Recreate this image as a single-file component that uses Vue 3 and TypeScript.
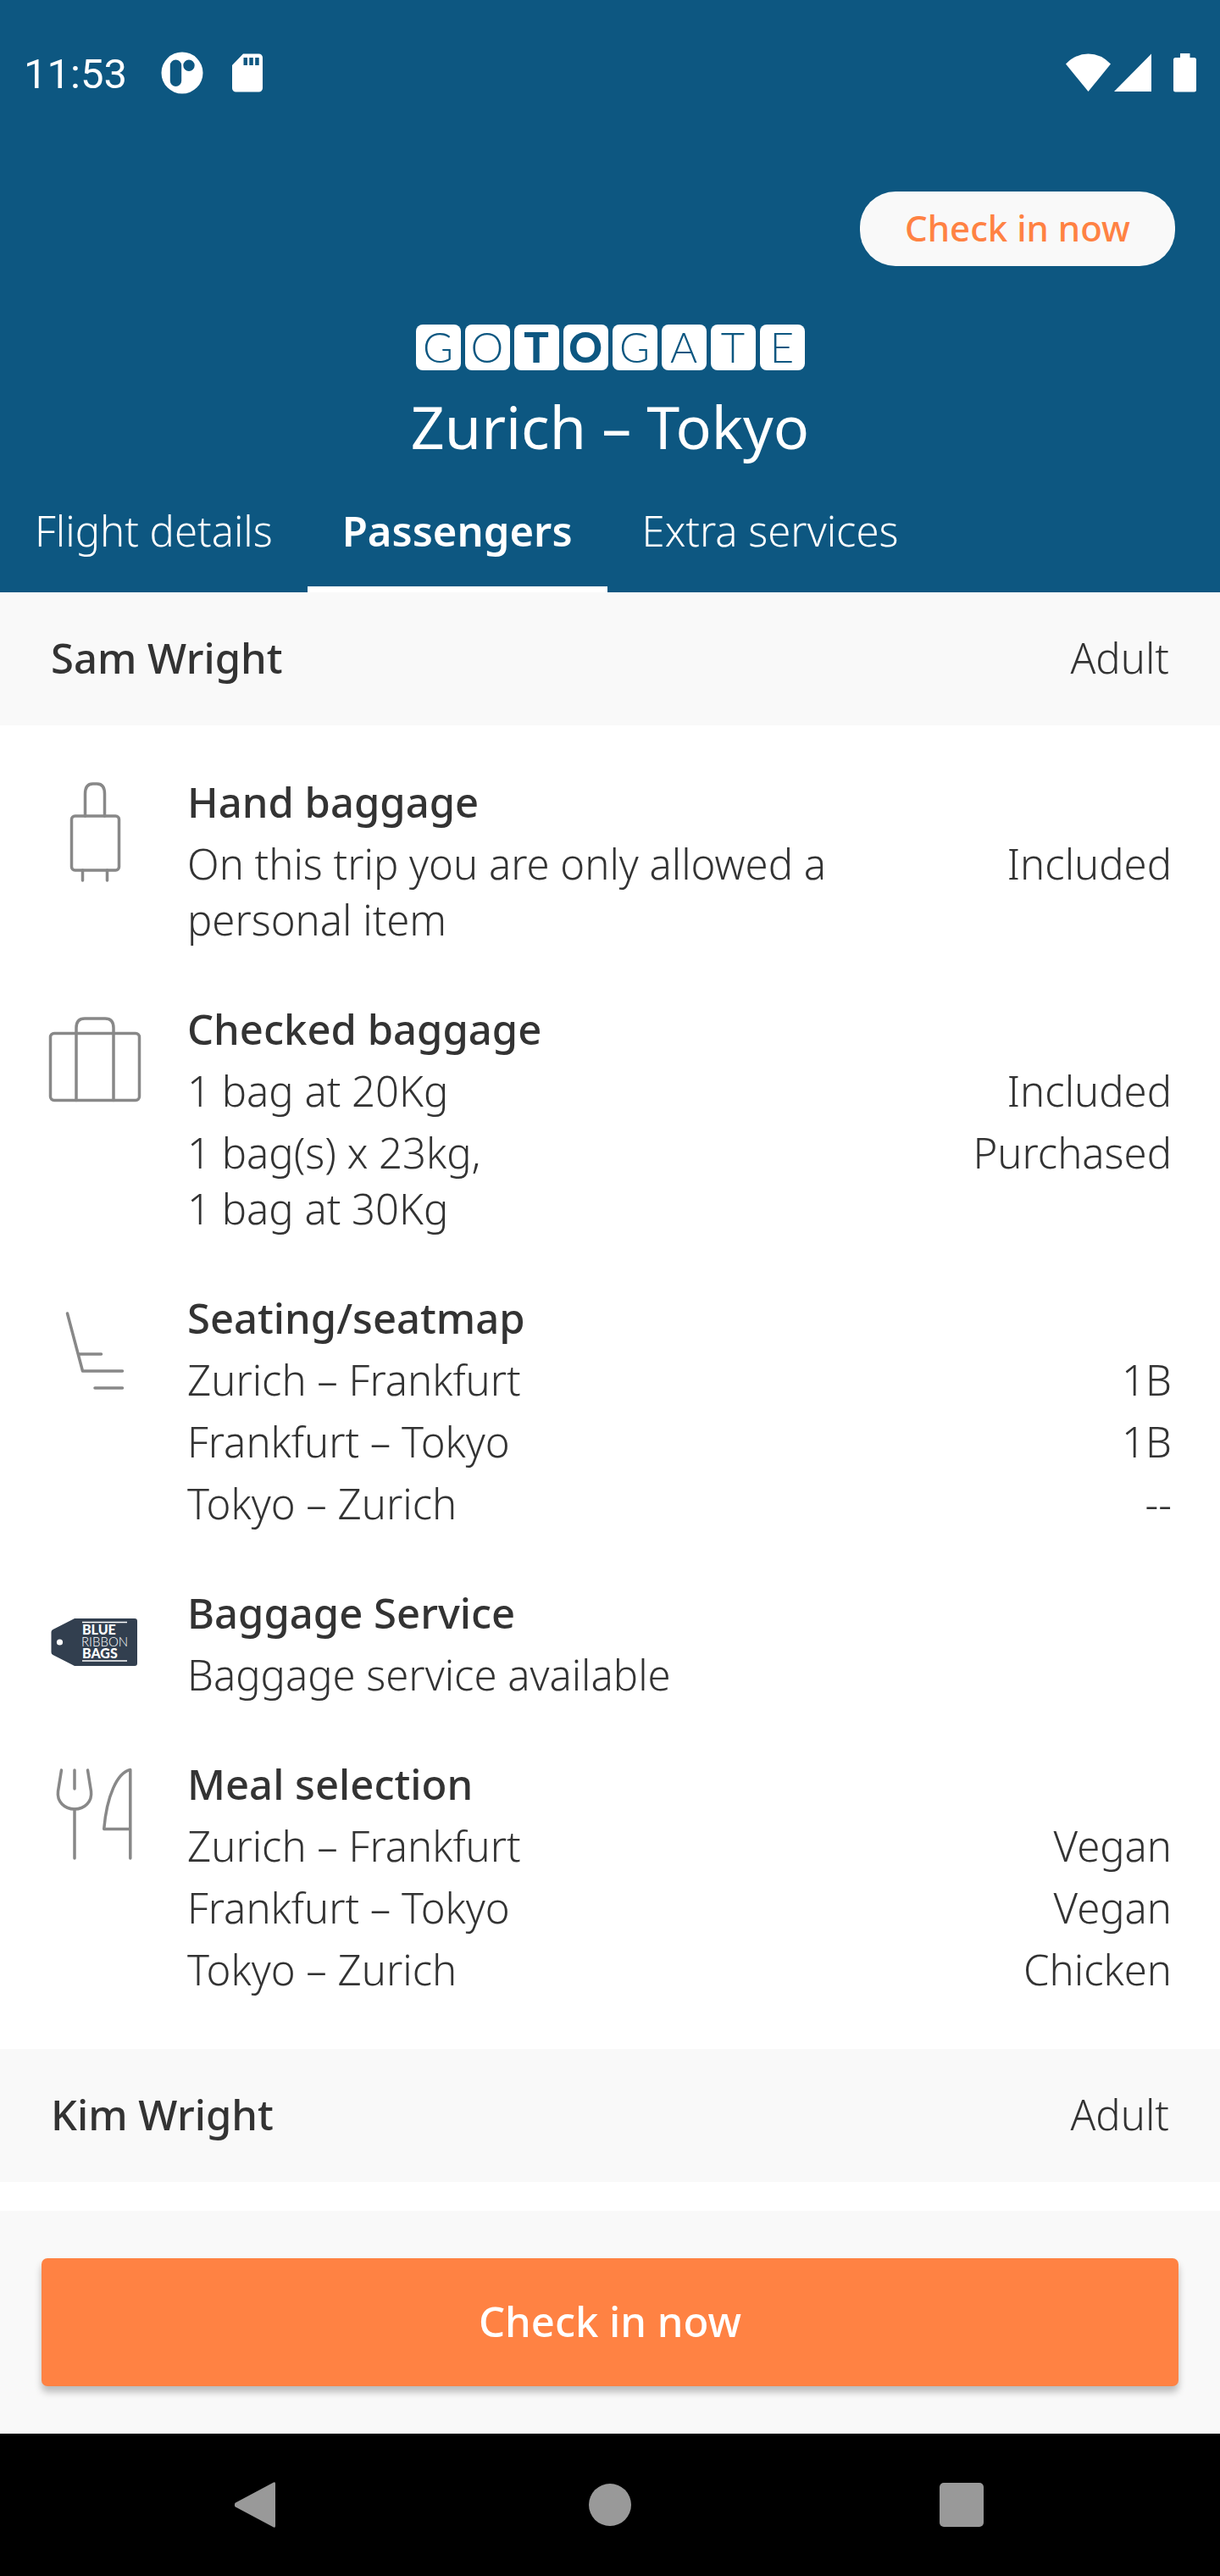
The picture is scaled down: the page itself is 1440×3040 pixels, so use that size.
<script setup lang="ts">
import { ref } from 'vue'

type IconName = 'hand' | 'checked' | 'seat' | 'tag' | 'meal'

interface Row {
  label: string
  value?: string
}

interface Service {
  icon: IconName
  title: string
  rows: Row[]
}

interface Passenger {
  name: string
  type: string
  services: Service[]
}

const tabs = ['Flight details', 'Passengers', 'Extra services']
const activeTab = ref('Passengers')

const logo = [
  { letter: 'G', heavy: false },
  { letter: 'O', heavy: false },
  { letter: 'T', heavy: true },
  { letter: 'O', heavy: true },
  { letter: 'G', heavy: false },
  { letter: 'A', heavy: false },
  { letter: 'T', heavy: false },
  { letter: 'E', heavy: false },
]

const passengers: Passenger[] = [
  {
    name: 'Sam Wright',
    type: 'Adult',
    services: [
      {
        icon: 'hand',
        title: 'Hand baggage',
        rows: [{ label: 'On this trip you are only allowed a personal item', value: 'Included' }],
      },
      {
        icon: 'checked',
        title: 'Checked baggage',
        rows: [
          { label: '1 bag at 20Kg', value: 'Included' },
          { label: '1 bag(s) x 23kg,\n1 bag at 30Kg', value: 'Purchased' },
        ],
      },
      {
        icon: 'seat',
        title: 'Seating/seatmap',
        rows: [
          { label: 'Zurich – Frankfurt', value: '1B' },
          { label: 'Frankfurt – Tokyo', value: '1B' },
          { label: 'Tokyo – Zurich', value: '--' },
        ],
      },
      {
        icon: 'tag',
        title: 'Baggage Service',
        rows: [{ label: 'Baggage service available' }],
      },
      {
        icon: 'meal',
        title: 'Meal selection',
        rows: [
          { label: 'Zurich – Frankfurt', value: 'Vegan' },
          { label: 'Frankfurt – Tokyo', value: 'Vegan' },
          { label: 'Tokyo – Zurich', value: 'Chicken' },
        ],
      },
    ],
  },
  { name: 'Kim Wright', type: 'Adult', services: [] },
]
</script>

<template>
  <div class="screen">
    <header class="header">
      <div class="status">
        <div class="status-left">
          <span class="clock">11:53</span>
          <svg class="ic-app" viewBox="0 0 50 50" aria-hidden="true">
            <path
              fill-rule="evenodd"
              d="M25 .5a24.5 24.5 0 1 1 0 49a24.5 24.5 0 1 1 0-49zM17.500 9.500a6.700 6.700 0 0 0-6.700 6.700v18a6.700 6.700 0 0 0 13.400 0v-18a6.700 6.700 0 0 0-6.700-6.700zM33 9.500a6.700 6.700 0 1 0 0 13.400a6.700 6.700 0 1 0 0-13.400z"
            />
          </svg>
          <svg class="ic-sd" viewBox="0 0 36 46" aria-hidden="true">
            <path
              fill-rule="evenodd"
              d="M13 .5h18.500a4.500 4.500 0 0 1 4.500 4.500v36a4.500 4.500 0 0 1-4.500 4.500h-27a4.500 4.500 0 0 1-4.500-4.500v-27zM13.500 5v9h4.500v-9zM20.300 5v9h4.500v-9zM27.200 5v9h4.500v-9z"
            />
          </svg>
        </div>
        <div class="status-right">
          <svg class="ic-wifi" viewBox="0 0 53 46" aria-hidden="true">
            <path d="M26.500 45L0 12.500Q11.500 .5 26.500 .5T53 12.500z" />
          </svg>
          <svg class="ic-signal" viewBox="0 0 44 46" aria-hidden="true">
            <path d="M44 .5V45H0z" />
          </svg>
          <svg class="ic-battery" viewBox="0 0 27 46" aria-hidden="true">
            <path
              d="M8 0h11.500v5H24.500a2.500 2.500 0 0 1 2.500 2.500v35.500a2.500 2.500 0 0 1-2.500 2.500h-22A2.500 2.500 0 0 1 0 43V7.500A2.500 2.500 0 0 1 2.500 5H8z"
            />
          </svg>
        </div>
      </div>

      <div class="actions">
        <button type="button" class="pill">Check in now</button>
      </div>

      <div class="logo" aria-label="Gotogate">
        <span v-for="(tile, i) in logo" :key="i" class="tile" :class="{ heavy: tile.heavy }">{{ tile.letter }}</span>
      </div>
      <h1 class="title">Zurich – Tokyo</h1>

      <nav class="tabs">
        <button
          v-for="tab in tabs"
          :key="tab"
          type="button"
          class="tab"
          :class="{ active: tab === activeTab }"
          @click="activeTab = tab"
        >
          {{ tab }}
        </button>
      </nav>
    </header>

    <main class="content">
      <section v-for="p in passengers" :key="p.name">
        <div class="person">
          <h2 class="name">{{ p.name }}</h2>
          <span>{{ p.type }}</span>
        </div>
        <div v-if="p.services.length" class="services">
          <article v-for="s in p.services" :key="s.title" class="service">
            <svg class="icon" viewBox="0 0 112 139" aria-hidden="true">
              <g v-if="s.icon === 'hand'">
                <path d="M44.500 50V24q0-12 9-12h5q9 0 9 12v26" />
                <rect x="28.500" y="50" width="56" height="64" rx="4" />
                <path d="M41.500 114v12M70.500 114v12" />
              </g>
              <g v-else-if="s.icon === 'checked'">
                <rect x="3.500" y="38.500" width="105" height="79" rx="4.500" />
                <path d="M34 117.500V32Q34 21 44 21H68Q78 21 78 32V117.500" />
              </g>
              <g v-else-if="s.icon === 'seat'">
                <path d="M23.500 28L41.500 96H88.500M37 76H63.500M56 116H88.500" />
              </g>
              <g v-else-if="s.icon === 'tag'" class="tag">
                <path
                  class="tag-body"
                  d="M32 40H103a3 3 0 0 1 3 3V93a3 3 0 0 1-3 3H32L6.500 83Q4.500 82 4.500 80V56Q4.500 54 6.500 53z"
                />
                <circle class="tag-hole" cx="14.500" cy="68" r="3.600" />
                <path class="tag-line" d="M41 44.500H94M41 90H94" />
                <text class="tag-bold" x="41" y="58.500">BLUE</text>
                <text class="tag-thin" x="40" y="73">RIBBON</text>
                <text class="tag-bold" x="41" y="87">BAGS</text>
              </g>
              <g v-else>
                <path d="M16.500 17L12.500 42C11 54 20 63 32 63S53 54 51.500 42L47.500 17" />
                <path d="M32 17V39M32 63V121" />
                <path d="M97.800 121V16.500C82 20 70 48 66.700 86.500H97.800" />
              </g>
            </svg>
            <div class="details">
              <h3 class="service-title">{{ s.title }}</h3>
              <div v-for="(r, i) in s.rows" :key="i" class="row">
                <span class="label">{{ r.label }}</span>
                <span v-if="r.value" class="value">{{ r.value }}</span>
              </div>
            </div>
          </article>
        </div>
      </section>
    </main>

    <footer class="footer">
      <button type="button" class="cta">Check in now</button>
    </footer>

    <nav class="system-nav">
      <button type="button" aria-label="Back">
        <svg viewBox="0 0 56 56">
          <path d="M46 1.500Q48 .5 48 3V53Q48 55.500 46 54.500L1 30.500Q-2 28 1 25.500z" />
        </svg>
      </button>
      <button type="button" aria-label="Home">
        <svg viewBox="0 0 56 56"><circle cx="28" cy="28" r="25" /></svg>
      </button>
      <button type="button" aria-label="Recent apps">
        <svg viewBox="0 0 56 56"><rect x="2" y="2" width="52" height="52" rx="5" /></svg>
      </button>
    </nav>
  </div>
</template>

<style>
body {
  margin: 0;
  background: #fff;
}
</style>

<style scoped>
.screen {
  display: flex;
  flex-direction: column;
  min-height: 100vh;
  color: #333;
  font-family: 'Noto Sans', 'Open Sans', sans-serif;
  font-size: 49px;
  font-weight: 300;
  line-height: 66px;
}

h1,
h2,
h3 {
  margin: 0;
  font-size: inherit;
}

button {
  margin: 0;
  padding: 0;
  border: 0;
  background: none;
  color: inherit;
  font: inherit;
  cursor: pointer;
}

.header {
  background: #0d5781;
  color: #fff;
}

.status {
  display: flex;
  align-items: center;
  justify-content: space-between;
  height: 172px;
  padding: 0 28px;
}

.status svg {
  display: block;
  height: 46px;
  fill: #fff;
}

.status-left,
.status-right {
  display: flex;
  align-items: center;
}

.clock {
  margin-right: 40px;
  padding-top: 3px;
  font-family: Roboto, sans-serif;
  font-weight: 400;
}

.status .ic-app {
  width: 50px;
  height: 50px;
  margin-right: 34px;
}

.ic-sd {
  width: 36px;
}

.ic-wifi {
  width: 53px;
  margin-right: 4px;
}

.ic-signal {
  width: 44px;
  margin-right: 26px;
}

.ic-battery {
  width: 27px;
}

.actions {
  display: flex;
  justify-content: flex-end;
  padding: 54px 53px 0;
}

.pill {
  width: 372px;
  height: 88px;
  padding-bottom: 3px;
  border-radius: 42px;
  background: #f9f9f9;
  color: #ff8243;
  font-size: 42px;
  font-weight: 500;
}

.logo {
  display: flex;
  justify-content: center;
  gap: 5px;
  padding-top: 69px;
}

.tile {
  width: 53px;
  height: 54px;
  border-radius: 8px;
  background: #fff;
  color: #0d5781;
  font-family: Lato, sans-serif;
  font-size: 49px;
  font-weight: 300;
  line-height: 52px;
  text-align: center;
}

.tile.heavy {
  font-weight: 900;
}

.title {
  padding-top: 16px;
  font-size: 70px;
  font-weight: 400;
  line-height: 100px;
  text-align: center;
}

.tabs {
  display: flex;
}

.tab {
  padding: 40px 41px 33px;
  border-bottom: 7px solid transparent;
}

.tab.active {
  border-bottom-color: #fff;
  font-weight: 600;
}

.content {
  flex: 1;
  padding-bottom: 33px;
  background: #fff;
}

.person {
  display: flex;
  box-sizing: border-box;
  align-items: center;
  justify-content: space-between;
  height: 157px;
  padding: 0 60px 4px;
  background: #f9f9f9;
}

.name,
.service-title {
  font-weight: 500;
}

.services {
  display: flex;
  flex-direction: column;
  gap: 63px;
  padding: 57px 57px 61px 56px;
}

.service {
  display: flex;
  align-items: flex-start;
  gap: 53px;
}

.icon {
  flex: none;
  width: 112px;
  height: 139px;
  fill: none;
  stroke: #888;
  stroke-width: 3.5;
  stroke-linecap: round;
  stroke-linejoin: round;
}

.tag {
  stroke: none;
}

.tag-body {
  fill: #323f4f;
}

.tag-hole {
  fill: #fff;
}

.tag-line {
  stroke: #fff;
  stroke-width: 1.5;
  stroke-linecap: butt;
}

.tag text {
  fill: #fff;
  font-family: Lato, sans-serif;
  font-size: 15px;
}

.tag .tag-bold {
  font-size: 16px;
  font-weight: 900;
}

.tag .tag-thin {
  font-weight: 300;
}

.details {
  display: flex;
  flex: 1;
  flex-direction: column;
  gap: 7px;
}

.row {
  display: flex;
  justify-content: space-between;
  gap: 56px;
}

.label {
  white-space: pre-line;
}

.value {
  flex: none;
}

.footer {
  display: flex;
  padding: 56px 49px;
  background: #f9f9f9;
}

.cta {
  flex: 1;
  height: 151px;
  padding-bottom: 3px;
  border-radius: 7px;
  background: #ff8243;
  box-shadow: 0 7px 8px rgba(0, 0, 0, 0.25);
  color: #fff;
  font-weight: 500;
}

.system-nav {
  display: flex;
  align-items: center;
  justify-content: center;
  gap: 359px;
  height: 168px;
  background: #000;
}

.system-nav svg {
  display: block;
  width: 56px;
  height: 56px;
  fill: #999;
}
</style>
